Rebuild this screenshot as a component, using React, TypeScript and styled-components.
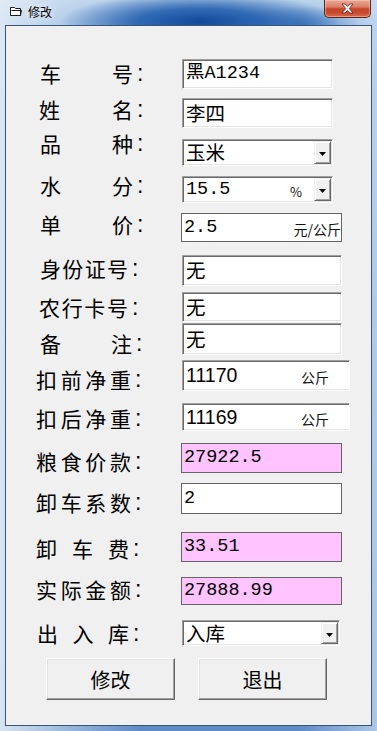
import React from "react";
import styled, { createGlobalStyle } from "styled-components";

const GlobalStyle = createGlobalStyle`
  html, body {
    margin: 0;
    padding: 0;
  }
  body {
    width: 377px;
    height: 731px;
    overflow: hidden;
    font-family: "Noto Sans CJK SC", sans-serif;
  }
`;

type Look = "sunken" | "flat" | "pink";
type Font = "mono" | "sans" | "cjk";

interface FieldSpec {
    combo?: boolean;
    value: string;
    width: number;
    look?: Look;
    font?: Font;
    unit?: string;
    unitSize?: number;
    unitRight?: number;
    open?: boolean;
    shift?: number;
}

interface RowSpec {
    chars: string[];
    left: number;
    right: number;
    gap: number;
    height: number;
    labelTop: number;
    field: FieldSpec;
}

const rows: RowSpec[] = [
    { chars: ["车", "号"], left: 40, right: 133, gap: 33, height: 30, labelTop: 2, field: { value: "黑A1234", width: 151, font: "mono" } },
    { chars: ["姓", "名"], left: 39, right: 133, gap: 9, height: 30, labelTop: -1, field: { value: "李四", width: 151 } },
    { chars: ["品", "种"], left: 40, right: 133, gap: 11, height: 27, labelTop: -8, field: { combo: true, value: "玉米", width: 151 } },
    { chars: ["水", "分"], left: 40, right: 133, gap: 10, height: 27, labelTop: -3, field: { combo: true, value: "15.5", width: 151, font: "mono", unit: "%", unitSize: 13, unitRight: 12 } },
    { chars: ["单", "价"], left: 40, right: 133, gap: 10, height: 29, labelTop: -1, field: { value: "2.5", width: 161, look: "flat", font: "mono", unit: "元/公斤", unitSize: 14, unitRight: 0, shift: -1 } },
    { chars: ["身", "份", "证", "号"], left: 40, right: 128, gap: 13, height: 31, labelTop: 1, field: { value: "无", width: 160 } },
    { chars: ["农", "行", "卡", "号"], left: 39, right: 128, gap: 6, height: 30, labelTop: 3, field: { value: "无", width: 160 } },
    { chars: ["备", "注"], left: 40, right: 132, gap: 1, height: 30, labelTop: 8, field: { value: "无", width: 160 } },
    { chars: ["扣", "前", "净", "重"], left: 36, right: 131, gap: 7, height: 28, labelTop: 7, field: { value: "11170", width: 168, font: "sans", unit: "公斤", unitSize: 14, unitRight: 20, open: true } },
    { chars: ["扣", "后", "净", "重"], left: 36, right: 131, gap: 15, height: 28, labelTop: 3, field: { value: "11169", width: 168, font: "sans", unit: "公斤", unitSize: 14, unitRight: 20, open: true } },
    { chars: ["粮", "食", "价", "款"], left: 36, right: 131, gap: 12, height: 29, labelTop: 6, field: { value: "27922.5", width: 161, look: "pink", font: "mono", shift: -1 } },
    { chars: ["卸", "车", "系", "数"], left: 36, right: 131, gap: 11, height: 29, labelTop: 7, field: { value: "2", width: 161, look: "flat", font: "mono", shift: -1 } },
    { chars: ["卸", "车", "费"], left: 36, right: 129, gap: 20, height: 30, labelTop: 4, field: { value: "33.51", width: 161, look: "pink", font: "mono", shift: -1 } },
    { chars: ["实", "际", "金", "额"], left: 36, right: 131, gap: 15, height: 28, labelTop: 0, field: { value: "27888.99", width: 161, look: "pink", font: "mono", shift: -1 } },
    { chars: ["出", "入", "库"], left: 37, right: 129, gap: 15, height: 26, labelTop: 1, field: { combo: true, value: "入库", width: 158 } },
];

const fontStacks: Record<Font, string> = {
    mono: `"Liberation Mono", "Noto Sans CJK SC", monospace`,
    sans: `"Liberation Sans", "Noto Sans CJK SC", sans-serif`,
    cjk: `"Noto Sans CJK SC", sans-serif`,
};

const fontSizes: Record<Font, number> = { mono: 18.5, sans: 19.5, cjk: 19.5 };

const FolderIcon = () => (
    <svg width="12" height="11" viewBox="0 0 12 11">
        <path d="M0.5 1.5 H4.5 L5.5 2.5 H10.5 V9.5 H0.5 Z" fill="#fff" stroke="#1a1a1a" />
        <path d="M1.5 4.5 H11.5 L10.5 9.5" fill="none" stroke="#1a1a1a" />
    </svg>
);

const CloseGlyph = () => (
    <svg width="13" height="11" viewBox="0 0 13 11">
        <path
            d="M1 1 H4 L6.5 3.6 L9 1 H12 L8.2 5.5 L12 10 H9 L6.5 7.4 L4 10 H1 L4.8 5.5 Z"
            fill="#fff"
            stroke="#5a1a12"
            strokeWidth="0.8"
            strokeLinejoin="round"
        />
    </svg>
);

const ComboArrow = () => (
    <svg width="7" height="4" viewBox="0 0 7 4">
        <path d="M0 0 H7 L3.5 4 Z" fill="#000" />
    </svg>
);

const Field = ({ spec }: { spec: FieldSpec }) => {
    const font = spec.font ?? "cjk";
    return (
        <Box $look={spec.look ?? "sunken"} $open={spec.open} $width={spec.width} $shift={spec.shift ?? 0}>
            <Value $font={font}>{spec.value}</Value>
            {spec.unit && (
                <Unit $size={spec.unitSize ?? 14} $right={spec.unitRight ?? 0}>
                    {spec.unit}
                </Unit>
            )}
            {spec.combo && (
                <DropButton>
                    <ComboArrow />
                </DropButton>
            )}
        </Box>
    );
};

const App = () => {
    return (
        <>
            <GlobalStyle />
            <Window>
                <TitleBar>
                    <TitleLeft>
                        <FolderIcon />
                        <TitleText>修改</TitleText>
                    </TitleLeft>
                    <CloseButton>
                        <CloseGlyph />
                    </CloseButton>
                </TitleBar>
                <Client>
                    {rows.map((row, i) => (
                        <Row key={i} $gap={row.gap} $height={row.height}>
                            <Label $top={row.labelTop}>
                                <LabelChars $left={row.left - 6} $width={row.right - row.left}>
                                    {row.chars.map((c, j) => (
                                        <span key={j}>{c}</span>
                                    ))}
                                </LabelChars>
                                <Colon>:</Colon>
                            </Label>
                            <Field spec={row.field} />
                        </Row>
                    ))}
                    <ButtonRow>
                        <PushButton>修改</PushButton>
                        <PushButton>退出</PushButton>
                    </ButtonRow>
                </Client>
            </Window>
        </>
    );
};

const Window = styled.div`
    width: 377px;
    height: 731px;
    display: flex;
    flex-direction: column;
    box-sizing: border-box;
    background:
        radial-gradient(ellipse 140px 30px at 200px 22px, rgba(18, 72, 155, 1) 0%, rgba(30, 92, 172, 0.85) 45%, rgba(50, 110, 185, 0) 100%),
        radial-gradient(ellipse 60px 18px at 300px 24px, rgba(60, 118, 190, 0.8), rgba(70, 125, 195, 0) 100%),
        linear-gradient(90deg, rgba(228, 237, 247, 0.9) 0px, rgba(205, 222, 240, 0.5) 70px, rgba(160, 190, 225, 0) 140px, rgba(150, 185, 225, 0) 300px, rgba(205, 225, 245, 0.7) 377px),
        linear-gradient(180deg, #bcd3ec 0px, #8fb3de 25px, #6f9bd0 300px, #5f8cc6 731px);
`;

const TitleBar = styled.div`
    height: 25px;
    flex: none;
    display: flex;
    justify-content: space-between;
    align-items: flex-start;
    padding: 0 6px 0 10px;
`;

const TitleLeft = styled.div`
    display: flex;
    align-items: center;
    gap: 6px;
    height: 23px;
`;

const TitleText = styled.span`
    font-family: "Noto Sans CJK SC", sans-serif;
    font-size: 12px;
    color: #000;
    line-height: 1;
    text-shadow: 0 0 6px rgba(255, 255, 255, 0.9);
`;

const CloseButton = styled.div`
    width: 47px;
    height: 18px;
    box-sizing: border-box;
    display: flex;
    align-items: center;
    justify-content: center;
    border: 1px solid #5e2418;
    border-top: none;
    border-radius: 0 0 5px 5px;
    background: linear-gradient(180deg, #e9a896 0%, #dc8068 40%, #c5452b 52%, #c74a2f 75%, #db6c4e 100%);
    box-shadow: inset 0 0 0 1px rgba(255, 220, 210, 0.45);
`;

const Client = styled.div`
    flex: 1;
    margin: 0 5px 5px;
    border: 1px solid #3b5675;
    background: #f0f0f0;
    display: flex;
    flex-direction: column;
`;

const Row = styled.div<{ $gap: number; $height: number }>`
    display: grid;
    grid-template-columns: 176px auto;
    align-items: start;
    margin-top: ${(p) => p.$gap}px;
    height: ${(p) => p.$height}px;
`;

const Label = styled.div<{ $top: number }>`
    display: flex;
    align-items: center;
    margin-top: ${(p) => p.$top}px;
    height: 24px;
    font-size: 21px;
    line-height: 24px;
    color: #000;
`;

const LabelChars = styled.div<{ $left: number; $width: number }>`
    display: flex;
    justify-content: space-between;
    margin-left: ${(p) => p.$left}px;
    width: ${(p) => p.$width}px;
    font-family: "Noto Sans CJK SC", sans-serif;
`;

const Colon = styled.span`
    font-family: "Liberation Sans", sans-serif;
    font-size: 23px;
    margin-left: 4px;
`;

const Box = styled.div<{ $look: Look; $open?: boolean; $width: number; $shift: number }>`
    box-sizing: border-box;
    width: ${(p) => p.$width}px;
    height: 100%;
    margin-left: ${(p) => p.$shift}px;
    display: flex;
    align-items: center;
    background: ${(p) => (p.$look === "pink" ? "#ffc3ff" : "#fff")};
    ${(p) =>
        p.$look === "sunken"
            ? `
        border: 1px solid;
        border-color: #a0a0a0 #fff #fff #a0a0a0;
        box-shadow: inset 1px 1px 0 #696969, inset ${p.$open ? "0" : "-1px"} -1px 0 #e3e3e3;
        padding-left: 3px;
    `
            : `
        border: 1px solid #646464;
        padding-left: 2px;
    `}
`;

const Value = styled.span<{ $font: Font }>`
    flex: 1;
    font-family: ${(p) => fontStacks[p.$font]};
    font-size: ${(p) => fontSizes[p.$font]}px;
    line-height: 1.15;
    color: #000;
    white-space: nowrap;
`;

const Unit = styled.span<{ $size: number; $right: number }>`
    font-family: "Noto Sans CJK SC", sans-serif;
    font-size: ${(p) => p.$size}px;
    line-height: 1;
    margin-right: ${(p) => p.$right}px;
    margin-top: 3px;
    color: #111;
    white-space: nowrap;
`;

const DropButton = styled.div`
    align-self: stretch;
    width: 17px;
    box-sizing: border-box;
    margin: 1px 1px 1px 0;
    display: flex;
    align-items: center;
    justify-content: center;
    padding-top: 3px;
    background: #f0f0f0;
    border: 1px solid;
    border-color: #f0f0f0 #696969 #696969 #f0f0f0;
    box-shadow: inset 1px 1px 0 #fff, inset -1px -1px 0 #a0a0a0;
`;

const ButtonRow = styled.div`
    display: flex;
    gap: 23px;
    margin: 12px 0 0 40px;
`;

const PushButton = styled.div`
    width: 129px;
    height: 42px;
    box-sizing: border-box;
    display: flex;
    align-items: center;
    justify-content: center;
    background: #f0f0f0;
    border: 1px solid;
    border-color: #fff #696969 #696969 #fff;
    box-shadow: inset -1px -1px 0 #a0a0a0, inset 1px 1px 0 #e3e3e3;
    font-family: "Noto Sans CJK SC", sans-serif;
    font-size: 20px;
    color: #000;
`;

export default App;
